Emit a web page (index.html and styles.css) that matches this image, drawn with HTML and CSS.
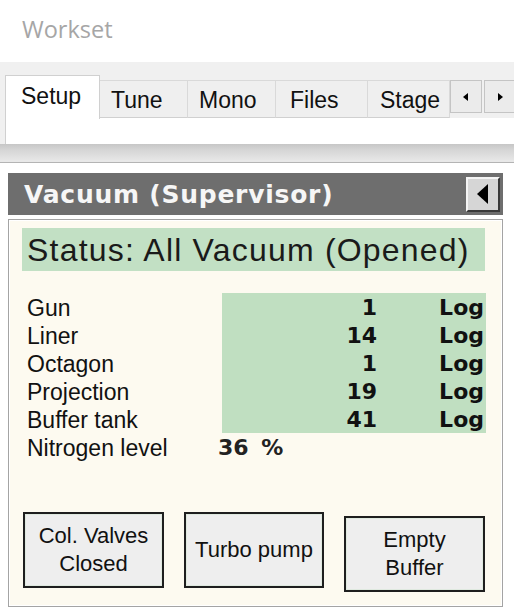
FILE: index.html
```html
<!DOCTYPE html>
<html>
<head>
<meta charset="utf-8">
<link rel="stylesheet" href="styles.css">
</head>
<body>
<div class="title">Workset</div>
<div class="tabstrip">
  <div class="tabs">
    <div class="tab active w1">Setup</div>
    <div class="tab w2">Tune</div>
    <div class="tab w3">Mono</div>
    <div class="tab w4">Files</div>
    <div class="tab w5">Stage</div>
    <div class="scroll">
      <div class="sbtn sl"><svg width="6" height="8" viewBox="0 0 6 8"><path d="M5 0 L0 4 L5 8 Z" fill="#000"/></svg></div>
      <div class="sbtn sr"><svg width="6" height="8" viewBox="0 0 6 8"><path d="M1 0 L6 4 L1 8 Z" fill="#000"/></svg></div>
    </div>
  </div>
  <div class="pane"></div>
</div>
<div class="band"></div>
<div class="rule"></div>
<div class="panel">
  <div class="header">
    <span class="htitle">Vacuum (Supervisor)</span>
    <div class="hbtn"><svg width="12" height="20" viewBox="0 0 12 20"><path d="M11 0 L0 10 L11 20 Z" fill="#000"/></svg></div>
  </div>
  <div class="body">
    <div class="status">Status: All Vacuum (Opened)</div>
    <div class="rows">
      <div class="row"><span class="lbl">Gun</span><span class="vals"><span class="v">1</span><span class="log">Log</span></span></div>
      <div class="row"><span class="lbl">Liner</span><span class="vals"><span class="v">14</span><span class="log">Log</span></span></div>
      <div class="row"><span class="lbl">Octagon</span><span class="vals"><span class="v">1</span><span class="log">Log</span></span></div>
      <div class="row"><span class="lbl">Projection</span><span class="vals"><span class="v">19</span><span class="log">Log</span></span></div>
      <div class="row"><span class="lbl">Buffer tank</span><span class="vals"><span class="v">41</span><span class="log">Log</span></span></div>
      <div class="row"><span class="lbl">Nitrogen level</span><span class="nval">36 %</span></div>
    </div>
    <div class="buttons">
      <div class="btn">Col. Valves<br>Closed</div>
      <div class="btn b2">Turbo pump</div>
      <div class="btn b3">Empty<br>Buffer</div>
    </div>
  </div>
</div>
</body>
</html>
```
FILE: styles.css
```css
html, body {
  margin: 0;
  padding: 0;
  background: #ffffff;
}
body {
  width: 514px;
  height: 613px;
  overflow: hidden;
  font-family: "Liberation Sans", Arial, sans-serif;
  color: #111;
}
.title {
  height: 62px;
  box-sizing: border-box;
  padding: 13px 0 0 22px;
  font-family: "Open Sans", "Noto Sans", sans-serif;
  font-size: 23.5px;
  line-height: 32px;
  color: #a6a6a6;
}
.tabstrip {
  background: #f0f0f0;
  padding-top: 13px;
}
.tabs {
  display: flex;
  align-items: flex-end;
  height: 43px;
  padding-left: 5px;
  position: relative;
  z-index: 1;
}
.tab {
  box-sizing: border-box;
  height: 38px;
  padding-top: 6px;
  font-size: 23px;
  line-height: 26px;
  background: #efefef;
  border: 1px solid #d9d9d9;
  border-bottom: 1px solid #d0d0d0;
  border-left: none;
  white-space: nowrap;
}
.tab.active {
  height: 44px;
  margin-bottom: -1px;
  padding-top: 7px;
  background: #ffffff;
  border: 1px solid #d0d0d0;
  border-bottom: none;
}
.w1 { width: 95px; padding-left: 15px; }
.w2 { width: 88px; padding-left: 11px; }
.w3 { width: 88px; padding-left: 11px; }
.w4 { width: 92px; padding-left: 14px; }
.w5 { width: 82px; padding-left: 12px; }
.scroll {
  display: flex;
  gap: 2px;
  align-self: flex-start;
  margin-top: 5px;
}
.sbtn {
  box-sizing: border-box;
  height: 33px;
  display: flex;
  align-items: center;
  justify-content: center;
  background: #ebebeb;
  border: 1px solid #c4c4c4;
}
.sl { width: 32px; }
.sr { width: 30px; border-right: none; }
.pane {
  height: 26px;
  margin-left: 5px;
  background: #ffffff;
  border-left: 1px solid #d0d0d0;
}
.band {
  height: 16px;
  background: linear-gradient(#c6c6c6, #d6d6d6 40%, #e6e6e6);
}
.rule {
  height: 2px;
  background: #e8e8e8;
  border-bottom: 1px solid #b4b4b4;
}
.panel {
  margin: 10px 0 0 8px;
  width: 495px;
}
.header {
  height: 42px;
  background: #6e6e6e;
  display: flex;
  align-items: center;
  justify-content: space-between;
  padding: 0 3px 0 16px;
}
.htitle {
  font-family: "DejaVu Sans", Verdana, sans-serif;
  font-weight: bold;
  font-size: 25px;
  letter-spacing: 0.75px;
  color: #f6f6f6;
}
.hbtn {
  box-sizing: border-box;
  width: 34px;
  height: 35px;
  background: #d6d6d6;
  border-top: 2px solid #f4f4f4;
  border-left: 2px solid #f4f4f4;
  border-right: 2px solid #3a3a3a;
  border-bottom: 2px solid #3a3a3a;
  display: flex;
  align-items: center;
  justify-content: center;
}
.body {
  margin-top: 4px;
  box-sizing: border-box;
  height: 388px;
  background: #fdfaf0;
  border: 1px solid #a4a4a4;
  box-shadow: inset 0 0 0 1px #ffffff;
  padding: 8px 0 0 13px;
}
.status {
  width: 463px;
  height: 43px;
  box-sizing: border-box;
  background: #c2e0c4;
  padding: 1px 0 0 5px;
  font-size: 32px;
  line-height: 43px;
  letter-spacing: 1.2px;
  color: #1a1a1a;
  white-space: nowrap;
}
.rows {
  margin-top: 22px;
}
.row {
  display: flex;
  height: 28px;
  line-height: 30px;
}
.lbl {
  width: 200px;
  box-sizing: border-box;
  padding-left: 5px;
  font-size: 23px;
  white-space: nowrap;
}
.vals {
  display: flex;
  width: 264px;
  background: #c0dfc1;
  font-family: "DejaVu Sans", Verdana, sans-serif;
  font-weight: bold;
  font-size: 22px;
}
.v {
  width: 155px;
  text-align: right;
}
.log {
  width: 109px;
  box-sizing: border-box;
  text-align: right;
  padding-right: 2px;
}
.nval {
  margin-left: -4px;
  font-family: "DejaVu Sans", Verdana, sans-serif;
  font-weight: bold;
  font-size: 22px;
  word-spacing: 5px;
  color: #222;
}
.buttons {
  display: flex;
  gap: 20px;
  align-items: flex-start;
  margin-top: 51px;
  padding-left: 1px;
}
.btn {
  box-sizing: border-box;
  width: 141px;
  height: 76px;
  background: #eeeeee;
  border: 2px solid #1e1e1e;
  box-shadow: inset 0 0 0 1px #dfe9df;
  display: flex;
  align-items: center;
  justify-content: center;
  text-align: center;
  font-size: 22px;
  line-height: 28px;
  color: #111;
}
.b2 { width: 140px; }
.b3 { margin-top: 4px; }
```
